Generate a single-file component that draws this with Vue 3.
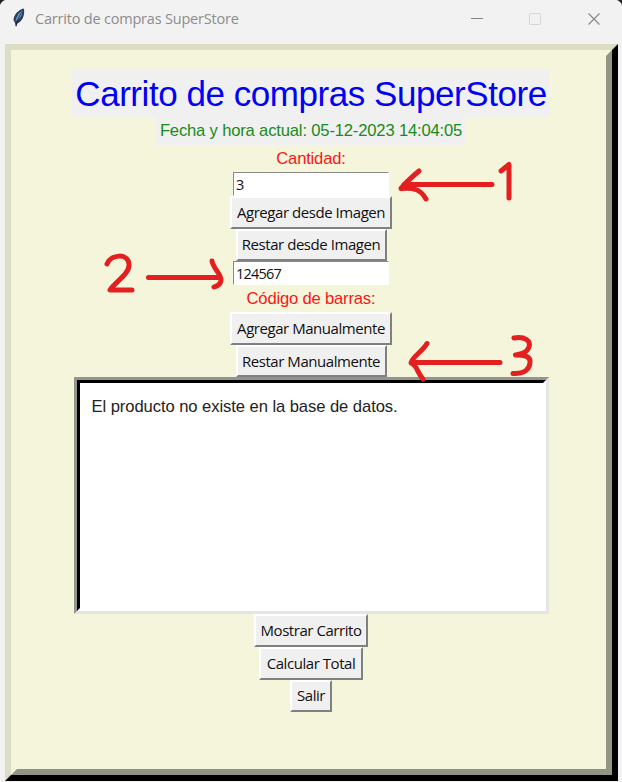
<script setup>
import { ref } from 'vue'

const title = 'Carrito de compras SuperStore'
const quantity = ref('3')
const barcode = ref('124567')
const message = 'El producto no existe en la base de datos.'
</script>

<template>
  <div class="window">
    <header class="titlebar">
      <svg class="feather" width="14" height="20" viewBox="0 0 14 20">
        <path d="M11 0.500 C7 2 2 6 1.500 12 L3 15 L4 19 L5.500 15.500 C10 13 13 8 12 1 Z" fill="#2b3b52" />
        <path d="M10.500 2 C7 4 4 9 3.500 13.500 C8 11 10.500 7 10.500 2 Z" fill="#6c9ad6" />
        <path d="M10 3 L5 13 L4 18" stroke="#172230" stroke-width="0.800" fill="none" />
      </svg>
      <span class="caption">{{ title }}</span>
      <svg class="controls" width="132" height="16" viewBox="0 0 132 16">
        <path d="M1 8.500 H13" stroke="#858585" />
        <rect x="59.500" y="3.500" width="11" height="11" rx="1" fill="none" stroke="#d6d6d6" />
        <path d="M118.500 3.500 L129.500 14.500 M129.500 3.500 L118.500 14.500" stroke="#858585" stroke-width="1.100" />
      </svg>
    </header>
    <div class="outer">
      <main class="inner">
        <h1><span>{{ title }}</span></h1>
        <div class="date"><span>Fecha y hora actual: 05-12-2023 14:04:05</span></div>
        <label class="qty">Cantidad:</label>
        <input v-model="quantity" />
        <button class="b1">Agregar desde Imagen</button>
        <button class="b2">Restar desde Imagen</button>
        <input v-model="barcode" />
        <label class="code">Código de barras:</label>
        <button class="b3">Agregar Manualmente</button>
        <button class="b4">Restar Manualmente</button>
        <div class="log"><div class="log-body"><span>{{ message }}</span></div></div>
        <button class="b5">Mostrar Carrito</button>
        <button class="b6">Calcular Total</button>
        <button class="b7">Salir</button>
      </main>
    </div>
    <svg class="marks" width="622" height="782" viewBox="0 0 622 782">
      <path d="M401 188.500 C406 182 413 176 419 171 M401 188.500 C414 187 421 190 426 199 M404 184.500 H492" />
      <path d="M501 171 L509 164.500 V198" />
      <path d="M107 264 C111 254 128 253 129 264 C130 274 115 282 110 290 H132" />
      <path d="M148.500 277.500 H219 M212 261 C213 268 221 274 221 280 C221 285 217 286 214 287" />
      <path d="M427 343.500 C422 352 412 357 411 363 C418 366 417 373 423 379 M412 362.500 H500" />
      <path d="M514 338 C525 336 531 341 529 347 C527 353 521 354 515.500 355 C524 355 531 356 530 363 C529 372 520 374 513 373.500" />
    </svg>
  </div>
</template>

<style>
body {
  margin: 0;
  background: #f0f0f0;
}
</style>

<style scoped>
.window {
  position: relative;
  box-sizing: border-box;
  width: 622px;
  height: 782px;
  padding: 0 4px 1px 5px;
  overflow: hidden;
  background: radial-gradient(circle at 8px 8px, transparent 8px, #222 9px) 0 0 / 8px 8px no-repeat,
    radial-gradient(circle at 0 8px, transparent 8px, #222 9px) 100% 0 / 8px 8px no-repeat, #f2f2f2;
}
.titlebar {
  display: flex;
  align-items: flex-start;
  height: 44px;
}
.feather {
  margin: 8px 0 0 7px;
}
.caption {
  margin: 8px 0 0 9px;
  font: 14.500px/22px "Open Sans", sans-serif;
  letter-spacing: -0.200px;
  color: #8c8c8c;
  white-space: nowrap;
}
.controls {
  margin: 10px 16px 0 auto;
}
.outer {
  box-sizing: border-box;
  height: 737px;
  border: 6px solid;
  border-color: #ddddc6 #000 #000 #ddddc6;
}
.inner {
  box-sizing: border-box;
  height: 725px;
  padding: 13px 1px 0 0;
  border: 6px solid;
  border-color: #f5f5dc #929484 #929484 #f5f5dc;
  background: #f5f5dc;
  display: flex;
  flex-direction: column;
  align-items: center;
  font-family: "Liberation Sans", sans-serif;
}
.inner > * {
  flex: none;
}
h1, .date, label, button {
  display: flex;
  align-items: center;
  justify-content: center;
  box-sizing: border-box;
  margin: 0;
  white-space: nowrap;
}
h1 {
  width: 478px;
  height: 48px;
  padding-top: 1px;
  background: #f0f0f0;
  color: #0000f5;
  font-size: 35px;
  font-weight: 400;
  letter-spacing: -0.450px;
}
.date {
  width: 310px;
  height: 28px;
  background: #f0f0f0;
  color: #1a8a1a;
  font-size: 16.600px;
  letter-spacing: -0.170px;
}
label {
  height: 27px;
  color: #fa1515;
  font-size: 16.600px;
  letter-spacing: -0.180px;
}
input {
  box-sizing: border-box;
  width: 156px;
  height: 24px;
  margin: 0;
  padding: 0 2px;
  border: 1px solid;
  border-color: #8a8a8a #fff #fff #8a8a8a;
  outline: none;
  background: #fff;
  color: #111;
  font: 14.500px "Open Sans", sans-serif;
  letter-spacing: -0.800px;
}
button {
  height: 32.600px;
  padding: 0 0 1px;
  border: 2px solid;
  border-color: #fff #808080 #808080 #fff;
  background: #f0f0f0;
  color: #111;
  font: 15px "Open Sans", sans-serif;
  letter-spacing: -0.450px;
}
.b1, .b3 {
  width: 162px;
}
.b2, .b4 {
  width: 151px;
}
.b5 {
  width: 114px;
}
.b6 {
  width: 104px;
}
.b7 {
  width: 42px;
}
.log {
  box-sizing: border-box;
  width: 475px;
  height: 237px;
  border: 3px solid;
  border-color: #929490 #e5e5e5 #e5e5e5 #929490;
}
.log-body {
  box-sizing: border-box;
  height: 231px;
  padding: 14px 12px;
  border: 3px solid;
  border-color: #000 #fff #fff #000;
  background: #fff;
  color: #222;
  font-size: 16.600px;
  letter-spacing: -0.070px;
  line-height: 20px;
}
.marks {
  position: absolute;
  inset: 0;
  fill: none;
  stroke: #e3201f;
  stroke-width: 5;
  stroke-linecap: round;
  stroke-linejoin: round;
  pointer-events: none;
}
</style>
